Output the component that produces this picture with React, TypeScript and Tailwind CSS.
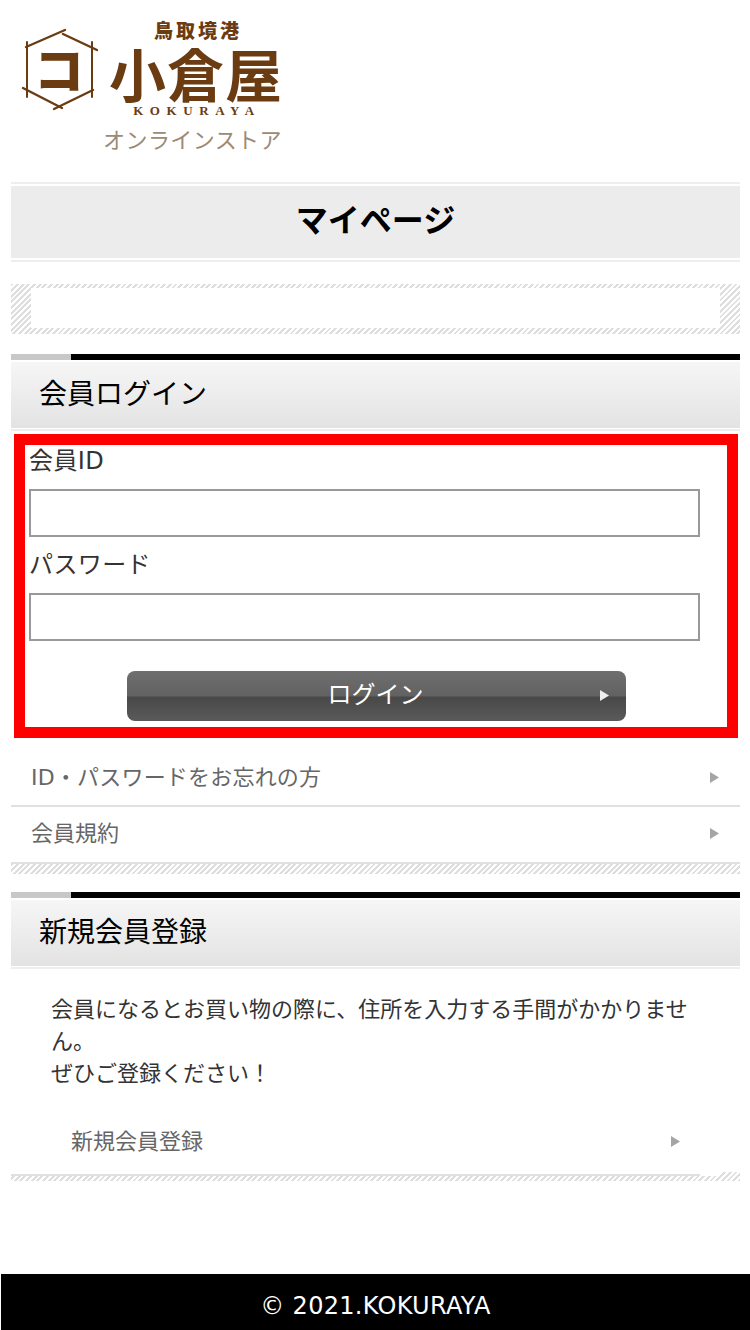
import React from 'react';

const jp = "font-['DejaVu_Sans','Noto_Sans_CJK_JP',sans-serif]";
const logoFont = "font-['Noto_Sans_CJK_JP','Noto_Sans',sans-serif]";
const hatch =
  'bg-[repeating-linear-gradient(135deg,#dedede_0,#dedede_2px,#ffffff_2px,#ffffff_4px)]';

// triangle used at the end of link rows
const Arrow = ({ className = '' }: { className?: string }) => (
  <svg width="9" height="11" viewBox="0 0 9 11" className={className}>
    <polygon points="0,0 9,5.5 0,11" fill="currentColor" />
  </svg>
);

const Logo = () => (
  <div className="flex h-[182px] items-start pl-[11px] pt-[20px]">
    <div className="relative mt-[5px] h-[90px] w-[87px] shrink-0 text-[#6b3c12]">
      <svg width="87" height="90" viewBox="0 0 87 90" className="text-[#6b3c12]">
        <g stroke="currentColor" strokeWidth="2.4" strokeLinecap="round">
          <line x1="15" y1="22" x2="54" y2="5" />
          <line x1="52" y1="9" x2="86" y2="25" />
          <line x1="16" y1="17" x2="16" y2="72" strokeWidth="2" />
          <line x1="81" y1="17" x2="81" y2="72" strokeWidth="2" />
          <line x1="12" y1="63" x2="51" y2="83" />
          <line x1="43" y1="84" x2="82" y2="65" />
        </g>
      </svg>
      <span
        className={`${logoFont} absolute left-[11px] top-[7px] w-[74px] text-center text-[50px] leading-[70px] font-black`}
      >
        コ
      </span>
    </div>
    <div className="ml-[7px] flex w-[178px] flex-col items-center whitespace-nowrap">
      <span className={`${logoFont} ml-[8px] text-[19px] leading-[20px] font-black tracking-[3px] text-[#6b3c12]`}>
        鳥取境港
      </span>
      <span className={`${logoFont} ml-[4px] mt-[2px] text-[57px] leading-[60px] font-bold tracking-[1px] text-[#6b3c12]`}>
        小倉屋
      </span>
      <span className="ml-[6px] mt-[2px] font-['Liberation_Serif',serif] text-[13px] leading-[14px] font-bold tracking-[6.6px] text-[#6b3c12]">
        KOKURAYA
      </span>
      <span className={`${logoFont} mt-[7px] -ml-[3px] text-[22px] leading-[26px] tracking-[0.4px] text-[#9c8a74]`}>
        オンラインストア
      </span>
    </div>
  </div>
);

const SectionHead = ({ title }: { title: string }) => (
  <div>
    <div className="flex h-[6px]">
      <div className="w-[60px] bg-[#c8c8c8]" />
      <div className="flex-1 bg-black" />
    </div>
    <div className="mt-[2px] flex h-[66px] items-center bg-gradient-to-b from-[#f6f6f6] to-[#e3e3e3] pl-[28px]">
      <span className="text-[28px] leading-[40px] text-black">{title}</span>
    </div>
    <div className="mt-[1px] h-[2px] bg-[#eeeeee]" />
  </div>
);

const Field = ({ label }: { label: string }) => (
  <label className="block">
    <span className="block text-[24px] leading-[32px] tracking-[0.4px] text-[#333333]">{label}</span>
    <input
      type="text"
      className="mt-[12px] block h-[48px] w-[671px] border-2 border-[#999999] bg-white outline-none"
    />
  </label>
);

export default function App() {
  return (
    <div className={`${jp} min-h-[1330px] w-[750px] bg-white`}>
      <div className="w-[740px] pl-[11px]">
        <div className="-ml-[11px]">
          <Logo />
        </div>

        {/* page title */}
        <div className="border-y-2 border-[#eeeeee] bg-white py-[2px]">
          <h1 className="flex h-[72px] items-center justify-center bg-[#ececec] pb-[2px] text-[32px] font-bold text-black">
            マイページ
          </h1>
        </div>

        {/* empty notice box */}
        <div className={`mt-[22px] px-[20px] pb-[6px] pt-[4px] ${hatch}`}>
          <div className="h-[40px] bg-white" />
        </div>

        <div className="mt-[20px]">
          <SectionHead title="会員ログイン" />
        </div>

        {/* login form */}
        <form className="ml-[3px] mt-[3px] h-[304px] w-[724px] border-[11px] border-[#ff0000] pl-[4px]">
          <Field label="会員ID" />
          <div className="mt-[12px]">
            <Field label="パスワード" />
          </div>
          <button
            type="button"
            className="relative ml-[98px] mt-[30px] flex h-[50px] w-[499px] items-center justify-center rounded-[8px] bg-[linear-gradient(to_bottom,#6e6e6e_0,#626262_50%,#484848_52%,#5a5a5a_100%)] pb-[3px] pr-[2px] text-[24px] text-white"
          >
            ログイン
            <Arrow className="absolute right-[17px] top-[19px] text-[#eeeeee]" />
          </button>
        </form>

        <div className="mt-[11px]">
          <div className="flex h-[58px] items-center justify-between border-b-2 border-[#e0e0e0] pl-[20px] pr-[21px] text-[22px] tracking-[0.2px] text-[#666666]">
            <span>ID・パスワードをお忘れの方</span>
            <Arrow className="text-[#a5a5a5]" />
          </div>
          <div className="flex h-[55px] items-center justify-between pb-[3px] pl-[20px] pr-[21px] text-[22px] text-[#666666]">
            <span>会員規約</span>
            <Arrow className="text-[#a5a5a5]" />
          </div>
        </div>
        <div className={`h-[12px] border-t-2 border-[#e0e0e0] ${hatch}`} />

        <div className="mt-[18px]">
          <SectionHead title="新規会員登録" />
        </div>

        {/* sign-up blurb */}
        <div className="px-[40px] pt-[25px] text-[22px] leading-[32px] text-[#333333]">
          <p>
            会員になるとお買い物の際に、住所を入力する手間がかかりません。
            <br />
            ぜひご登録ください！
          </p>
        </div>
        <div className="mt-[23px] flex h-[56px] items-center justify-between pl-[60px] pr-[60px] text-[22px] text-[#666666]">
          <span>新規会員登録</span>
          <Arrow className="text-[#a5a5a5]" />
        </div>
        <div className={`mt-[3px] h-[9px] pr-[20px] ${hatch}`}>
          <div className="h-[4px] bg-white pr-[20px]">
            <div className="h-[4px] border-b-2 border-[#e0e0e0]" />
          </div>
        </div>
      </div>

      <footer className="ml-px mt-[93px] flex h-[56px] items-center justify-center bg-black pt-[7px] text-[24px] tracking-[0.3px] text-white">
        © 2021.KOKURAYA
      </footer>
    </div>
  );
}
